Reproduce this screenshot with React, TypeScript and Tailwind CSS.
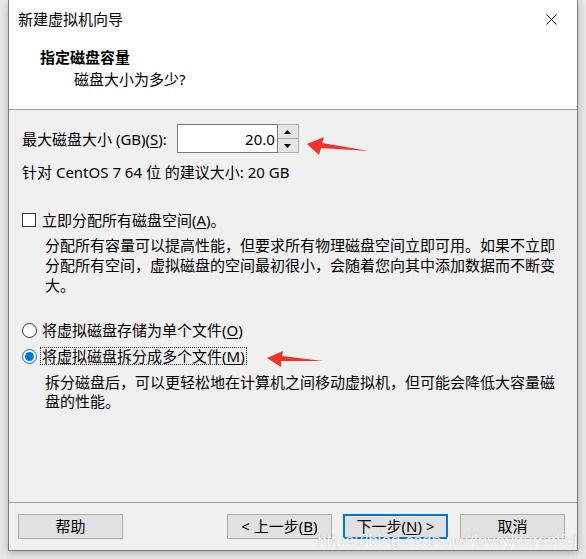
import React from "react";

const U = ({ c }: { c: string }) => <span className="underline underline-offset-[2px] decoration-1">{c}</span>;

function Btn({ children, primary }: { children: React.ReactNode; primary?: boolean }) {
  return (
    <div
      className={
        "h-[25px] flex items-center justify-center bg-[#e1e1e1] " +
        (primary ? "border-2 border-[#0078d7]" : "border border-[#adadad]")
      }
      style={{ width: 105 }}
    >
      {children}
    </div>
  );
}

export default function App() {
  return (
    <div
      className="w-[586px] h-[559px] bg-[#e8e8e8] pl-[8px] text-[15px] text-black overflow-hidden"
      style={{ fontFamily: "'Noto Sans', 'Noto Sans CJK SC', sans-serif" }}
    >
      <div className="relative w-[570px] h-[551px] border-x border-b border-[#7a7a7a] bg-[#f0f0f0] flex flex-col shadow-[0_2px_8px_rgba(0,0,0,0.25)]">
        {/* header */}
        <div className="h-[110px] bg-white border-b border-[#a0a0a0] flex flex-col">
          <div className="h-[38px] flex items-center justify-between pl-[9px] pr-[20px] leading-[20px]">
            <span>新建虚拟机向导</span>
            <svg width="11" height="11" viewBox="0 0 11 11">
              <path d="M0.5 0.5 L10.5 10.5 M10.5 0.5 L0.5 10.5" stroke="#000" strokeWidth="1" />
            </svg>
          </div>
          <div className="pl-[31px] mt-[9px] font-bold leading-[20px]">指定磁盘容量</div>
          <div className="pl-[65px] mt-[2px] leading-[20px]">磁盘大小为多少?</div>
        </div>

        {/* body */}
        <div className="flex-1 flex flex-col pl-[13px] pr-[8px] border-b border-[#a0a0a0]">
          <div className="mt-[14px] flex items-center h-[29px]">
            <span className="leading-[20px]">
              最大磁盘大小 (GB)(<U c="S" />):
            </span>
            <div className="ml-[10px] flex h-[29px]">
              <div className="w-[101px] h-[29px] border border-[#7a7a7a] bg-white flex items-center justify-end pr-[2px] leading-[20px]">
                20.0
              </div>
              <div className="w-[21px] h-[29px] flex flex-col border-y border-r border-[#adadad]">
                <div className="flex-1 bg-[#e5e5e5] border-b border-[#adadad] flex items-center justify-center">
                  <svg width="7" height="4" viewBox="0 0 7 4"><path d="M3.5 0 L7 4 L0 4 Z" fill="#000" /></svg>
                </div>
                <div className="flex-1 bg-[#e5e5e5] flex items-center justify-center">
                  <svg width="7" height="4" viewBox="0 0 7 4"><path d="M0 0 L7 0 L3.5 4 Z" fill="#000" /></svg>
                </div>
              </div>
            </div>
          </div>
          <div className="mt-[9px] leading-[20px]">针对 CentOS 7 64 位 的建议大小: 20 GB</div>

          <div className="mt-[28px] flex items-center h-[20px]">
            <div className="w-[14px] h-[14px] border border-[#333] bg-white" />
            <span className="ml-[6px] leading-[20px]">
              立即分配所有磁盘空间(<U c="A" />)。
            </span>
          </div>
          <div className="mt-[5px] pl-[23px] leading-[20px]">
            分配所有容量可以提高性能，但要求所有物理磁盘空间立即可用。如果不立即分配所有空间，虚拟磁盘的空间最初很小，会随着您向其中添加数据而不断变大。
          </div>

          <div className="mt-[25px] flex items-center h-[20px]">
            <div className="w-[15px] h-[15px] rounded-full border border-[#333] bg-white" />
            <span className="ml-[5px] leading-[20px]">
              将虚拟磁盘存储为单个文件(<U c="O" />)
            </span>
          </div>
          <div className="mt-[6px] flex items-center h-[20px]">
            <div className="w-[15px] h-[15px] rounded-full border border-[#0078d7] bg-white flex items-center justify-center">
              <div className="w-[9px] h-[9px] rounded-full bg-[#0078d7]" />
            </div>
            <span className="ml-[3px] px-[1px] leading-[16px] border border-dotted border-[#333]">
              将虚拟磁盘拆分成多个文件(<U c="M" />)
            </span>
          </div>
          <div className="mt-[7px] pl-[23px] leading-[19px]">
            拆分磁盘后，可以更轻松地在计算机之间移动虚拟机，但可能会降低大容量磁盘的性能。
          </div>
        </div>

        {/* footer */}
        <div className="h-[47px] flex items-start pt-[11px] pl-[9px] pr-[12px]">
          <Btn>帮助</Btn>
          <div className="flex-1" />
          <Btn>
            &lt; 上一步(<U c="B" />)
          </Btn>
          <div className="w-[11px]" />
          <Btn primary>
            下一步(<U c="N" />) &gt;
          </Btn>
          <div className="w-[12px]" />
          <Btn>取消</Btn>
        </div>

        {/* red arrows */}
        <svg className="absolute left-[296px] top-[135px]" width="66" height="22" viewBox="0 0 66 22">
          <polygon points="2,9 19,2 17,8 64,16 16,13 14,20" fill="#f2312a" />
        </svg>
        <svg className="absolute left-[256px] top-[349px]" width="60" height="20" viewBox="0 0 60 20">
          <polygon points="2,9 18,2 17,7 58,12 16,12 16,18" fill="#f2312a" />
        </svg>

        {/* watermark */}
        <div
          className="absolute right-[0px] bottom-[-1px] text-[17px] text-white/90 leading-[20px] [text-shadow:0_0_1px_rgba(0,0,0,0.3)]"
          style={{ fontFamily: "'Liberation Sans', Arial, sans-serif" }}
        >
          https://blog.csdn.net/loveyourselfcj
        </div>
      </div>
    </div>
  );
}
